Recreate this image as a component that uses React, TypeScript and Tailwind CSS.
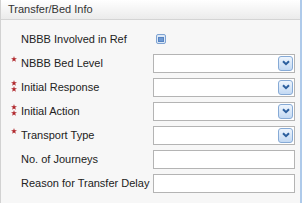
import React from "react";

type Row = {
  label: string;
  stars: 0 | 1 | 2;
  kind: "check" | "select" | "text";
};

const rows: Row[] = [
  { label: "NBBB Involved in Ref", stars: 0, kind: "check" },
  { label: "NBBB Bed Level", stars: 1, kind: "select" },
  { label: "Initial Response", stars: 2, kind: "select" },
  { label: "Initial Action", stars: 2, kind: "select" },
  { label: "Transport Type", stars: 1, kind: "select" },
  { label: "No. of Journeys", stars: 0, kind: "text" },
  { label: "Reason for Transfer Delay", stars: 0, kind: "text" },
];

function Star() {
  return (
    <svg width="6" height="6" viewBox="0 0 10 10" className="block">
      <polygon
        points="5,0 6.2,3.6 10,3.6 7,5.9 8.1,9.6 5,7.4 1.9,9.6 3,5.9 0,3.6 3.8,3.6"
        fill="#b0262b"
      />
    </svg>
  );
}

function Stars({ n }: { n: 0 | 1 | 2 }) {
  if (n === 0) return <div className="w-[20px]" />;
  return (
    <div className="w-[20px] pl-[10px] self-stretch flex flex-col justify-center">
      {n === 1 ? (
        <div className="-mt-[9px]">
          <Star />
        </div>
      ) : (
        <div className="-mt-[3px] flex flex-col gap-[0px]">
          <Star />
          <Star />
        </div>
      )}
    </div>
  );
}

function DropButton() {
  return (
    <div className="w-[15px] h-[15px] rounded-[3px] border border-[#86aad6] bg-gradient-to-b from-[#eef5fd] to-[#c3d9f3] flex items-center justify-center">
      <svg width="8" height="6" viewBox="0 0 8 6">
        <path d="M1 1.2 L4 4.2 L7 1.2" stroke="#2c5f9e" strokeWidth="2" fill="none" />
      </svg>
    </div>
  );
}

function Field({ kind }: { kind: Row["kind"] }) {
  if (kind === "check") {
    return (
      <div className="ml-[3px] w-[10px] h-[10px] rounded-[2px] border border-[#7fa3d2] bg-[#dce8f6] flex items-center justify-center">
        <div className="w-[6px] h-[5px] bg-[#6e9ad3] border border-[#5683c2]" />
      </div>
    );
  }
  return (
    <div className="w-[142px] h-[19px] border border-[#b4b4b4] bg-white flex items-center justify-end pr-[1px]">
      {kind === "select" && <DropButton />}
    </div>
  );
}

export default function App() {
  return (
    <div
      className="w-[304px] h-[203px] bg-white flex overflow-hidden text-[#222]"
      style={{ fontFamily: '"Liberation Sans", Arial, sans-serif' }}
    >
      <div className="w-[300px] h-full border-l border-[#d2d2d2] bg-[#f7f7f7] flex flex-col">
        {/* Header */}
        <div className="h-[20px] border-b border-[#d4d4d4] bg-gradient-to-b from-white to-[#ebebeb] pl-[7px] flex items-center text-[11px] text-[#333]">
          Transfer/Bed Info
        </div>

        {/* Fields */}
        <div className="pt-[7px] flex flex-col">
          {rows.map((r) => (
            <div key={r.label} className="h-[24px] flex items-center">
              <Stars n={r.stars} />
              <div className="w-[132px] text-[11px] leading-none">{r.label}</div>
              <Field kind={r.kind} />
            </div>
          ))}
        </div>
      </div>
      <div className="w-[2px] h-full bg-[#aecaea]" />
    </div>
  );
}
